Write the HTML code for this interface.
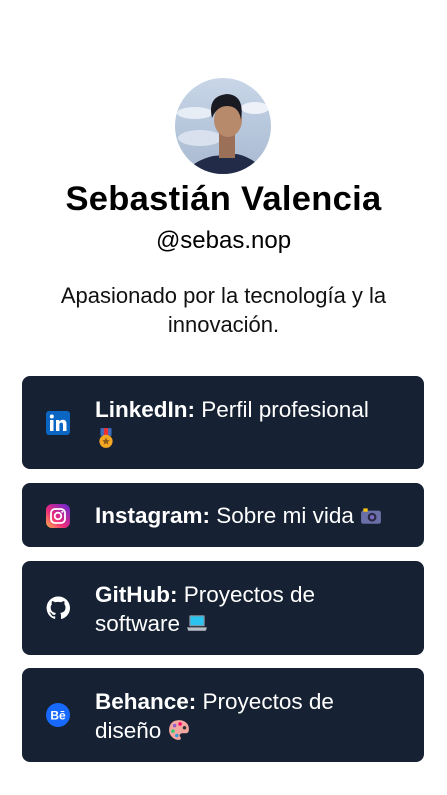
<!DOCTYPE html>
<html><head><meta charset="utf-8"><style>
*{margin:0;padding:0;box-sizing:border-box}
body{width:447px;height:795px;background:#fff;font-family:"Liberation Sans","DejaVu Sans",sans-serif;color:#000;position:relative;overflow:hidden}
.av{position:absolute;left:175px;top:78px;width:96px;height:96px;border-radius:50%;overflow:hidden;background:linear-gradient(180deg,#c9d6e8 0%,#b7c7dc 50%,#a9b9d0 100%)}
h1{position:absolute;top:180px;width:447px;text-align:center;font-size:34.5px;font-weight:bold;letter-spacing:0.3px}
.h{position:absolute;top:227px;width:447px;text-align:center;font-size:24px}
.bio{position:absolute;top:281px;width:447px;text-align:center;font-size:22px;line-height:29px;color:#111}
.c{position:absolute;left:22px;width:402px;background:#162233;border-radius:8px;color:#fff;font-size:22.5px;line-height:29px}
.c .t{position:absolute;left:73px;top:0;white-space:nowrap}
.c .i{position:absolute;left:24px;width:24px;height:24px}
.e{display:inline-block;vertical-align:-3px;width:22px;height:22px}
</style></head><body>
<div class="av"><svg width="96" height="96" viewBox="0 0 96 96">
<ellipse cx="20" cy="35" rx="18" ry="6" fill="#e6edf5"/><ellipse cx="80" cy="30" rx="14" ry="6" fill="#eef2f8"/>
<ellipse cx="25" cy="60" rx="22" ry="8" fill="#d8e1ed"/>
<path d="M8 96 Q20 82 38 78 L62 76 Q80 80 92 96Z" fill="#222c48"/>
<rect x="44" y="52" width="16" height="28" fill="#9a7058"/>
<ellipse cx="53" cy="42" rx="14" ry="17" fill="#b88a6c"/>
<path d="M37 40 Q32 18 52 16 Q70 17 66 42 Q64 28 52 28 Q42 28 37 40Z" fill="#1a1a22"/>
</svg></div>
<h1>Sebastián Valencia</h1>
<div class="h">@sebas.nop</div>
<div class="bio">Apasionado por la tecnología y la<br>innovación.</div>

<div class="c" style="top:376px;height:93px">
<svg class="i" style="top:35px" viewBox="0 0 24 24"><rect width="24" height="24" rx="3" fill="#0a66c2"/><rect x="4" y="9" width="3.5" height="11" fill="#fff"/><circle cx="5.8" cy="5.5" r="2" fill="#fff"/><path d="M10 9h3.3v1.6c.6-1 1.8-1.9 3.6-1.9 3 0 3.6 2 3.6 4.5V20H17v-5.8c0-1.4-.2-2.6-1.7-2.6s-1.9 1.1-1.9 2.5V20H10z" fill="#fff"/></svg>
<div class="t" style="top:19px"><b>LinkedIn:</b> Perfil profesional<br><svg class="e" viewBox="0 0 20 20"><path d="M5 1h10v7H5z" fill="#3c6fc4"/><path d="M8 1h4v7H8z" fill="#e33"/><circle cx="10" cy="13" r="6" fill="#f5a623"/><path d="M10 9.5l1 2.3 2.4.2-1.8 1.6.6 2.4-2.2-1.3-2.2 1.3.6-2.4-1.8-1.6 2.4-.2z" fill="#8a5a1a"/></svg></div>
</div>

<div class="c" style="top:483px;height:64px">
<svg class="i" style="top:21px" viewBox="0 0 24 24"><defs><linearGradient id="g" x1="0" y1="1" x2="1" y2="0"><stop offset="0" stop-color="#fdb44b"/><stop offset=".4" stop-color="#ee2a7b"/><stop offset="1" stop-color="#6228d7"/></linearGradient></defs><rect width="24" height="24" rx="6" fill="url(#g)"/><rect x="5" y="5" width="14" height="14" rx="4" fill="none" stroke="#fff" stroke-width="1.8"/><circle cx="12" cy="12" r="3.3" fill="none" stroke="#fff" stroke-width="1.8"/><circle cx="16.3" cy="7.7" r="1" fill="#fff"/></svg>
<div class="t" style="top:18px"><b>Instagram:</b> Sobre mi vida <svg class="e" viewBox="0 0 20 20"><rect x="1" y="6" width="18" height="12" rx="2" fill="#6b6fa8"/><rect x="3" y="4" width="4" height="3" fill="#f5c518"/><circle cx="11" cy="12" r="4" fill="#2a2a44"/><circle cx="11" cy="12" r="2" fill="#7a6ac0"/></svg></div>
</div>

<div class="c" style="top:561px;height:94px">
<svg class="i" style="top:35px" viewBox="0 0 24 24"><path fill="#fff" d="M12 .5a11.5 11.5 0 0 0-3.6 22.4c.6.1.8-.3.8-.6v-2c-3.2.7-3.9-1.5-3.9-1.5-.5-1.3-1.3-1.7-1.300-1.7-1-.7.1-.7.1-.7 1.2.1 1.8 1.2 1.8 1.2 1 1.8 2.7 1.3 3.4 1 .1-.8.4-1.3.7-1.6-2.6-.3-5.3-1.3-5.3-5.700 0-1.3.5-2.3 1.2-3.1-.1-.3-.5-1.5.1-3.1 0 0 1-.3 3.2 1.2a11 11 0 0 1 5.8 0c2.2-1.5 3.2-1.2 3.2-1.2.6 1.6.2 2.8.1 3.1.8.8 1.2 1.9 1.2 3.1 0 4.4-2.7 5.4-5.3 5.7.4.4.8 1.1.8 2.2v3.2c0 .3.2.7.8.6A11.5 11.5 0 0 0 12 .5z"/></svg>
<div class="t" style="top:19px"><b>GitHub:</b> Proyectos de<br>software <svg class="e" viewBox="0 0 20 20"><rect x="3" y="3" width="14" height="10" rx="1" fill="#8a9099"/><rect x="4" y="4" width="12" height="8" fill="#2bc4f0"/><path d="M1 14h18l-1 3H2z" fill="#b9bec5"/></svg></div>
</div>

<div class="c" style="top:668px;height:94px">
<svg class="i" style="top:35px" viewBox="0 0 24 24"><circle cx="12" cy="12" r="12" fill="#1769ff"/><text x="12" y="16.5" text-anchor="middle" font-family="Liberation Sans" font-weight="bold" font-size="12" fill="#fff">Bē</text></svg>
<div class="t" style="top:19px"><b>Behance:</b> Proyectos de<br>diseño <svg class="e" viewBox="0 0 20 20"><path d="M10 1C4 1 1 5 1 10s4 9 9 9c2 0 2-2 1-3s0-3 2-3h3c2 0 3-1 3-4 0-5-4-8-9-8z" fill="#f4a7a0"/><circle cx="6" cy="6" r="1.6" fill="#8e5bd0"/><circle cx="11" cy="4.5" r="1.6" fill="#f06"/><circle cx="4.5" cy="11" r="1.6" fill="#2ecc71"/><circle cx="15" cy="8" r="1.6" fill="#333"/><circle cx="8" cy="15" r="1.6" fill="#3498db"/></svg></div>
</div>
</body></html>
